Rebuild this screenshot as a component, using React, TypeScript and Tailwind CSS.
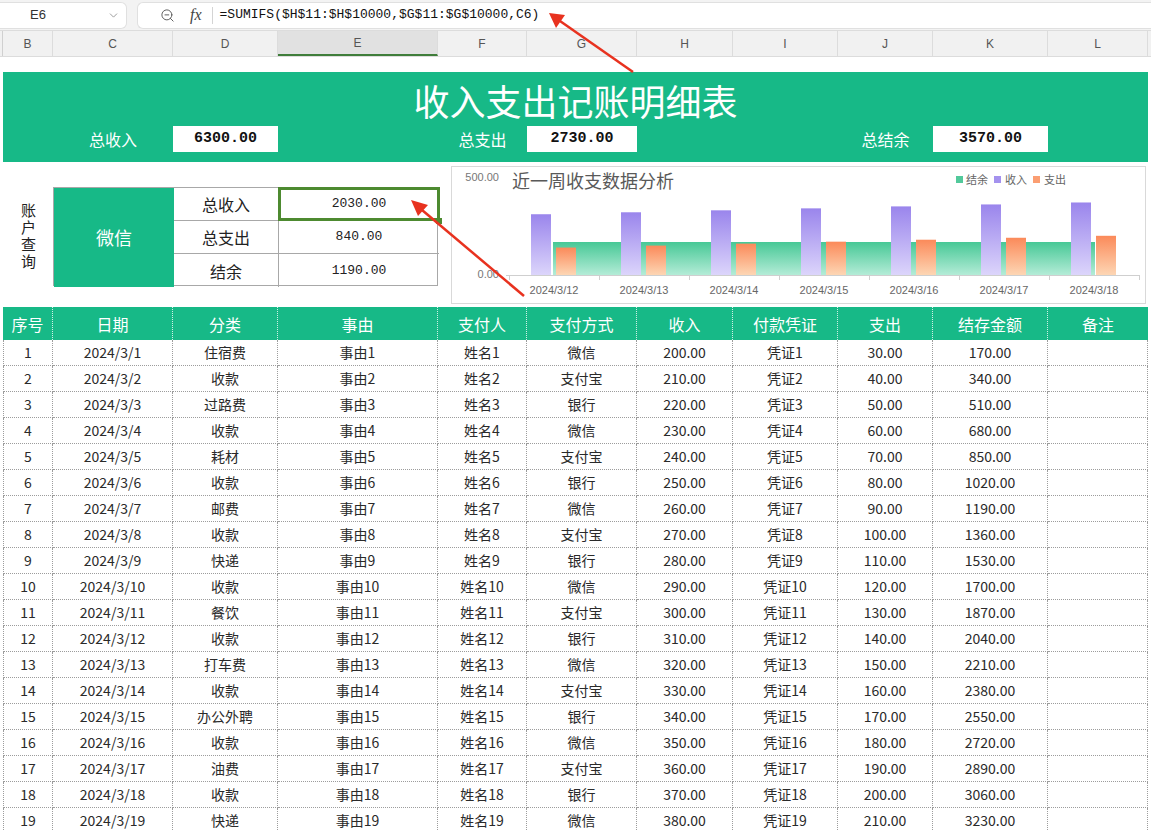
import { ChevronDown, ZoomOut } from "lucide-react";

const GREEN = "bg-[#17b987]";
const W = [
  "w-[50px]",
  "w-[120px]",
  "w-[105px]",
  "w-[160px]",
  "w-[89px]",
  "w-[110px]",
  "w-[96px]",
  "w-[105px]",
  "w-[95px]",
  "w-[115px]",
  "w-[100px]",
];

const letters = ["B", "C", "D", "E", "F", "G", "H", "I", "J", "K", "L"];
const headers = ["序号", "日期", "分类", "事由", "支付人", "支付方式", "收入", "付款凭证", "支出", "结存金额", "备注"];
const cats = [
  "住宿费", "收款", "过路费", "收款", "耗材", "收款", "邮费", "收款", "快递", "收款",
  "餐饮", "收款", "打车费", "收款", "办公外聘", "收款", "油费", "收款", "快递",
];
const pays = ["微信", "支付宝", "银行"];

const rows = cats.map((c, i) => {
  const n = i + 1;
  return [
    String(n),
    `2024/3/${n}`,
    c,
    `事由${n}`,
    `姓名${n}`,
    pays[i % 3],
    (200 + 10 * i).toFixed(2),
    `凭证${n}`,
    (30 + 10 * i).toFixed(2),
    (170 * n).toFixed(2),
    "",
  ];
});

const mono = "font-['Liberation_Mono','Noto_Sans_CJK_SC',monospace]";
const sans = "font-['Noto_Sans_CJK_SC','Liberation_Sans',sans-serif]";

function Chart() {
  const days = ["2024/3/12", "2024/3/13", "2024/3/14", "2024/3/15", "2024/3/16", "2024/3/17", "2024/3/18"];
  const inc = [310, 320, 330, 340, 350, 360, 370];
  const exp = [140, 150, 160, 170, 180, 190, 200];
  const k = 0.196;
  return (
    <svg width="695" height="138" viewBox="0 0 695 138" className="block">
      <defs>
        <linearGradient id="gp" x1="0" y1="0" x2="0" y2="1">
          <stop offset="0" stopColor="#9a85ec" />
          <stop offset="1" stopColor="#dcd5fb" />
        </linearGradient>
        <linearGradient id="go" x1="0" y1="0" x2="0" y2="1">
          <stop offset="0" stopColor="#fb8a5a" />
          <stop offset="1" stopColor="#fdd6b4" />
        </linearGradient>
        <linearGradient id="gg" x1="0" y1="0" x2="0" y2="1">
          <stop offset="0" stopColor="#47c896" />
          <stop offset="1" stopColor="#b4ecd7" />
        </linearGradient>
      </defs>
      <g fontFamily="'Liberation Sans','Noto Sans CJK SC',sans-serif" fontSize="11" fill="#777">
        <text x="47" y="14" textAnchor="end">500.00</text>
        <text x="47" y="111" textAnchor="end">0.00</text>
      </g>
      <text x="60" y="21" fontSize="18" fill="#595959" fontFamily="'Noto Sans CJK SC',sans-serif">
        近一周收支数据分析
      </text>
      <g fontFamily="'Noto Sans CJK SC',sans-serif" fontSize="11" fill="#666">
        <rect x="504" y="9" width="7" height="7" fill="#52c99b" />
        <text x="514" y="17">结余</text>
        <rect x="542" y="9" width="7" height="7" fill="#a492ee" />
        <text x="553" y="17">收入</text>
        <rect x="581" y="9" width="7" height="7" fill="#fb9e72" />
        <text x="592" y="17">支出</text>
      </g>
      <rect x="101" y="75" width="542" height="33" fill="url(#gg)" />
      {inc.map((v, i) => (
        <rect key={"p" + i} x={79 + 90 * i} y={108 - v * k} width="20" height={v * k} fill="url(#gp)" />
      ))}
      {exp.map((v, i) => (
        <rect key={"o" + i} x={104 + 90 * i} y={108 - v * k} width="20" height={v * k} fill="url(#go)" />
      ))}
      <line x1="54" y1="108.5" x2="687" y2="108.5" stroke="#cfcfcf" />
      {Array.from({ length: 8 }).map((_, i) => (
        <line key={"t" + i} x1={57.5 + 90 * i} y1="108" x2={57.5 + 90 * i} y2="113" stroke="#cfcfcf" />
      ))}
      <g fontFamily="'Liberation Sans',sans-serif" fontSize="11" fill="#666">
        {days.map((d, i) => (
          <text key={d} x={102 + 90 * i} y="127" textAnchor="middle">
            {d}
          </text>
        ))}
      </g>
    </svg>
  );
}

export default function App() {
  return (
    <div className={`relative w-[1151px] h-[831px] overflow-hidden bg-white ${sans}`}>
      {/* formula bar */}
      <div className="flex h-[30px] items-center gap-[10px] bg-[#f3f3f3] pr-0">
        <div className="flex h-[27px] w-[127px] items-center rounded-r-md border border-l-0 border-[#e0e0e0] bg-white pl-[30px] pr-[6px]">
          <span className="flex-1 text-[13px] text-[#333] font-['Liberation_Sans',sans-serif]">E6</span>
          <ChevronDown className="h-[13px] w-[13px] text-[#888]" strokeWidth={1.5} />
        </div>
        <div className="flex h-[27px] flex-1 items-center rounded-l-md border border-r-0 border-[#e0e0e0] bg-white">
          <ZoomOut className="ml-[22px] h-[15px] w-[15px] text-[#555]" strokeWidth={1.5} />
          <span className="ml-[15px] font-['Liberation_Serif',serif] text-[16px] italic text-[#444]">fx</span>
          <span className="ml-[10px] h-[17px] w-px bg-[#d4d4d4]" />
          <span className={`ml-[7px] text-[13px] text-[#111] ${mono}`}>=SUMIFS($H$11:$H$10000,$G$11:$G$10000,C6)</span>
        </div>
      </div>

      {/* column header */}
      <div className="flex h-[27px] border-b border-t border-[#dcdcdc] bg-[#f1f1f1] text-[12px] text-[#555] font-['Liberation_Sans',sans-serif]">
        <div className="w-[3px] border-r border-[#d0d0d0]" />
        {letters.map((l, i) => (
          <div
            key={l}
            className={`${W[i]} flex items-center justify-center border-r border-[#dcdcdc] ${
              l === "E" ? "bg-[#e1e1e1] border-b-2 border-b-[#3f7d3a]" : ""
            }`}
          >
            {l}
          </div>
        ))}
      </div>

      <div className="h-[15px]" />

      {/* title band */}
      <div className={`ml-[3px] w-[1145px] h-[90px] ${GREEN} text-white`}>
        <div className="flex h-[54px] items-center justify-center pt-[2px] text-[36px] leading-none">
          收入支出记账明细表
        </div>
        <div className="flex h-[36px] items-start">
          {W.map((w, i) => {
            const label = i === 1 ? "总收入" : i === 4 ? "总支出" : i === 8 ? "总结余" : null;
            const val = i === 2 ? "6300.00" : i === 5 ? "2730.00" : i === 9 ? "3570.00" : null;
            return (
              <div key={i} className={`${w} h-[26px] flex items-center justify-center`}>
                {label && <span className="text-[16px]">{label}</span>}
                {val && (
                  <span className={`flex h-full w-full items-center justify-center bg-white text-[15px] font-bold text-[#111] ${mono}`}>
                    {val}
                  </span>
                )}
              </div>
            );
          })}
        </div>
      </div>

      {/* account query + chart */}
      <div className="flex h-[145px]">
        <div className="flex w-[438px] pl-[3px] pt-[25px]">
          <div className="flex h-[99px] w-[50px] items-center justify-center">
            <span className="text-[15px] leading-[20px] tracking-[2px] text-[#222] [writing-mode:vertical-rl]">账户查询</span>
          </div>
          <div className="grid h-[99px] w-[385px] grid-cols-[120px_105px_160px] grid-rows-[33px_33px_33px] border border-[#a8a8a8]">
            <div className={`row-span-3 flex items-center justify-center ${GREEN} text-[18px] text-white`}>微信</div>
            <div className="flex items-center justify-center border-b border-r border-[#a8a8a8] text-[16px] text-[#222]">总收入</div>
            <div className={`relative flex items-center justify-center border-b border-[#a8a8a8] text-[13px] text-[#222] ${mono}`}>
              2030.00
              <div className="absolute -inset-x-[1px] -top-[1px] -bottom-[1px] border-[3px] border-[#4d8a30]" />
              <div className="absolute -bottom-[4px] -right-[3px] h-[6px] w-[6px] bg-[#4d8a30]" />
            </div>
            <div className="flex items-center justify-center border-b border-r border-[#a8a8a8] text-[16px] text-[#222]">总支出</div>
            <div className={`flex items-center justify-center border-b border-[#a8a8a8] text-[13px] text-[#222] ${mono}`}>840.00</div>
            <div className="flex items-center justify-center border-r border-[#a8a8a8] text-[16px] text-[#222]">结余</div>
            <div className={`flex items-center justify-center text-[13px] text-[#222] ${mono}`}>1190.00</div>
          </div>
        </div>
        <div className="ml-[13px] mt-[4px] h-[138px] w-[695px] border border-[#d9d9d9]">
          <Chart />
        </div>
      </div>

      {/* data table */}
      <div className="ml-[3px] w-[1145px]">
        <div className={`flex h-[33px] ${GREEN} text-[16px] text-white`}>
          {headers.map((h, i) => (
            <div
              key={h}
              className={`${W[i]} flex items-center justify-center ${i < 10 ? "border-r border-dotted border-white/80" : ""}`}
            >
              {h}
            </div>
          ))}
        </div>
        {rows.map((r, ri) => (
          <div key={ri} className="flex h-[26px] border-l border-dotted border-[#9c9c9c] text-[14px] text-[#2a2a2a]">
            {r.map((c, ci) => (
              <div
                key={ci}
                className={`${ci === 0 ? "w-[49px]" : W[ci]} flex items-center justify-center border-b border-r border-dotted border-[#9c9c9c]`}
              >
                {c}
              </div>
            ))}
          </div>
        ))}
      </div>

      {/* annotation arrows */}
      <svg className="pointer-events-none absolute left-0 top-0" width="1151" height="831" viewBox="0 0 1151 831">
        <g stroke="#e8321f" strokeWidth="2.5" fill="#e8321f">
          <line x1="633" y1="72" x2="560" y2="21" />
          <polygon points="549,13 565,15 556,28" stroke="none" />
          <line x1="524" y1="296" x2="422" y2="210" />
          <polygon points="411,200 428,205 418,216" stroke="none" />
        </g>
      </svg>
    </div>
  );
}
